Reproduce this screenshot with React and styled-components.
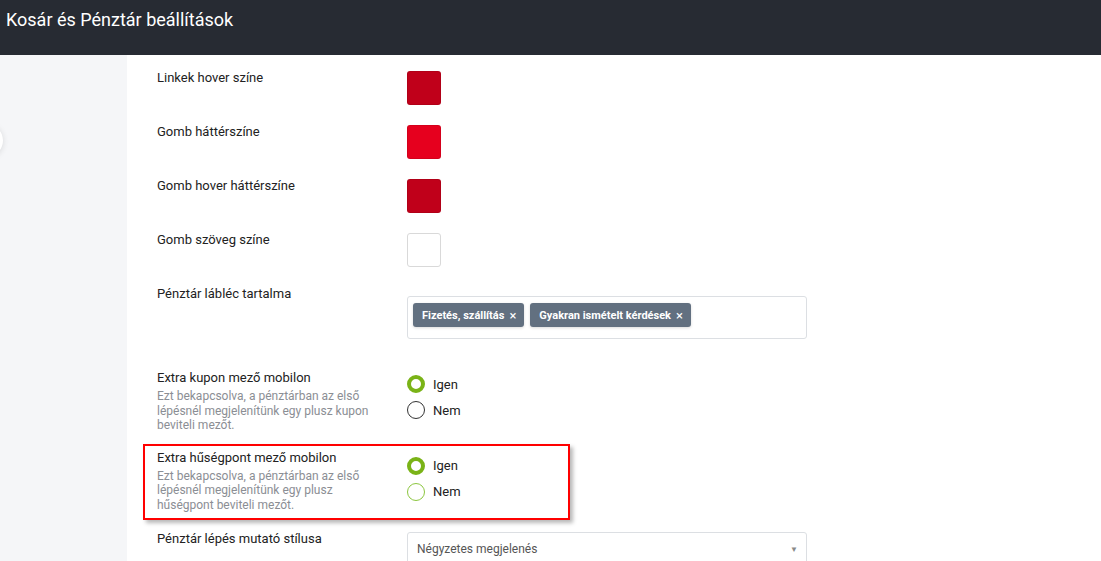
import React from "react";
import styled, { createGlobalStyle } from "styled-components";

const Global = createGlobalStyle`
  html, body { margin: 0; padding: 0; background: #ffffff; }
  body { font-family: Roboto, "Liberation Sans", sans-serif; color: #222; overflow: hidden; }
  * { box-sizing: border-box; }
`;

const Page = styled.div`
  width: 1101px;
  height: 561px;
  display: flex;
  flex-direction: column;
  overflow: hidden;
`;

const Header = styled.header`
  height: 55px;
  flex: 0 0 55px;
  background: #272b33;
  display: flex;
  align-items: flex-start;
  padding: 8px 6px 0;
`;

const Title = styled.h1`
  margin: 0;
  font-size: 18px;
  font-weight: 400;
  line-height: 24px;
  color: #ffffff;
`;

const Body = styled.div`
  flex: 1;
  display: flex;
  min-height: 0;
`;

const Sidebar = styled.aside`
  width: 127px;
  flex: 0 0 127px;
  background: #f5f6f8;
  position: relative;
`;

const CollapseKnob = styled.div`
  position: absolute;
  left: -30px;
  top: 69px;
  width: 33px;
  height: 33px;
  border-radius: 50%;
  background: #ffffff;
  box-shadow: 0 1px 6px rgba(0, 0, 0, 0.12);
`;

const Content = styled.main`
  flex: 1;
  background: #ffffff;
  padding: 13px 0 0 30px;
  display: flex;
  flex-direction: column;
`;

const Row = styled.div`
  display: grid;
  grid-template-columns: 250px 400px;
  align-items: start;
  margin-top: ${(p) => p.$mt ?? 17}px;
  ${(p) =>
    p.$highlight &&
    `
    grid-template-columns: 250px 1fr;
    width: 427px;
    margin-left: -14px;
    padding: 2px 12px 6px;
    border: 2px solid #ff0000;
    box-shadow: 3px 3px 4px rgba(0, 0, 0, 0.28);
  `}
`;

const LabelCol = styled.div`
  display: flex;
  flex-direction: column;
`;

const Label = styled.div`
  padding-top: 1px;
  font-size: 13px;
  line-height: 18px;
  color: #222;
`;

const Desc = styled.div`
  margin-top: 2px;
  font-size: 12px;
  line-height: 14.5px;
  color: #8b8e94;
  width: 218px;
`;

const Swatch = styled.div`
  margin-top: 3px;
  width: 34px;
  height: 34px;
  border-radius: 3px;
  background: ${(p) => p.$color};
  border: 1px solid ${(p) => (p.$light ? "#d9d9d9" : "rgba(0,0,0,0.08)")};
`;

const TagBox = styled.div`
  margin: 12px 0 12px;
  width: 400px;
  height: 43px;
  border: 1px solid #dcdfe3;
  border-radius: 3px;
  padding: 6px 5px;
  display: flex;
  align-items: flex-start;
  gap: 6px;
`;

const Tag = styled.span`
  display: inline-flex;
  align-items: center;
  gap: 5px;
  height: 24px;
  padding: 0 8px 0 9px;
  border-radius: 3px;
  background: #627080;
  color: #ffffff;
  font-size: 11px;
  font-weight: 700;
  box-shadow: 0 1px 3px rgba(0, 0, 0, 0.15);
`;

const TagClose = styled.span`
  font-size: 13px;
  font-weight: 400;
  line-height: 1;
`;

const RadioGroup = styled.div`
  margin-top: ${(p) => p.$mt ?? 3}px;
  display: flex;
  flex-direction: column;
`;

const RadioItem = styled.label`
  display: flex;
  align-items: center;
  gap: 8px;
  height: 26px;
  font-size: 13px;
  color: #222;
`;

const RadioCircle = styled.span`
  width: 18px;
  height: 18px;
  border-radius: 50%;
  flex: 0 0 18px;
  background: #ffffff;
  border: ${(p) =>
    p.$checked
      ? "4.5px solid #7ab317"
      : p.$tone === "green"
      ? "1.3px solid #8cc63f"
      : "1.3px solid #333333"};
`;

const Select = styled.div`
  margin-top: 3px;
  width: 400px;
  height: 34px;
  border: 1px solid #dcdfe3;
  border-radius: 3px;
  display: flex;
  align-items: center;
  justify-content: space-between;
  padding: 0 8px 0 9px;
  font-size: 12px;
  color: #555;
`;

const Caret = styled.span`
  font-size: 8px;
  color: #8a8a8a;
`;

function Radio({ checked, tone, children }) {
  return (
    <RadioItem>
      <RadioCircle $checked={checked} $tone={tone} />
      {children}
    </RadioItem>
  );
}

const swatches = [
  { label: "Linkek hover színe", color: "#c0001a" },
  { label: "Gomb háttérszíne", color: "#e6001e" },
  { label: "Gomb hover háttérszíne", color: "#c0001a" },
  { label: "Gomb szöveg színe", color: "#ffffff", light: true },
];

export default function App() {
  return (
    <Page>
      <Global />
      <Header>
        <Title>Kosár és Pénztár beállítások</Title>
      </Header>
      <Body>
        <Sidebar>
          <CollapseKnob />
        </Sidebar>
        <Content>
          {swatches.map((s, i) => (
            <Row key={s.label} $mt={i === 0 ? 0 : 17}>
              <Label>{s.label}</Label>
              <Swatch $color={s.color} $light={s.light} />
            </Row>
          ))}
          <Row>
            <Label>Pénztár lábléc tartalma</Label>
            <TagBox>
              <Tag>
                Fizetés, szállítás <TagClose>×</TagClose>
              </Tag>
              <Tag>
                Gyakran ismételt kérdések <TagClose>×</TagClose>
              </Tag>
            </TagBox>
          </Row>
          <Row>
            <LabelCol>
              <Label>Extra kupon mező mobilon</Label>
              <Desc>
                Ezt bekapcsolva, a pénztárban az első lépésnél megjelenítünk egy plusz kupon
                beviteli mezőt.
              </Desc>
            </LabelCol>
            <RadioGroup>
              <Radio checked>Igen</Radio>
              <Radio>Nem</Radio>
            </RadioGroup>
          </Row>
          <Row $highlight $mt={11}>
            <LabelCol>
              <Label>Extra hűségpont mező mobilon</Label>
              <Desc>
                Ezt bekapcsolva, a pénztárban az első lépésnél megjelenítünk egy plusz
                hűségpont beviteli mezőt.
              </Desc>
            </LabelCol>
            <RadioGroup $mt={5}>
              <Radio checked>Igen</Radio>
              <Radio tone="green">Nem</Radio>
            </RadioGroup>
          </Row>
          <Row $mt={9}>
            <Label>Pénztár lépés mutató stílusa</Label>
            <Select>
              Négyzetes megjelenés
              <Caret>▼</Caret>
            </Select>
          </Row>
        </Content>
      </Body>
    </Page>
  );
}
